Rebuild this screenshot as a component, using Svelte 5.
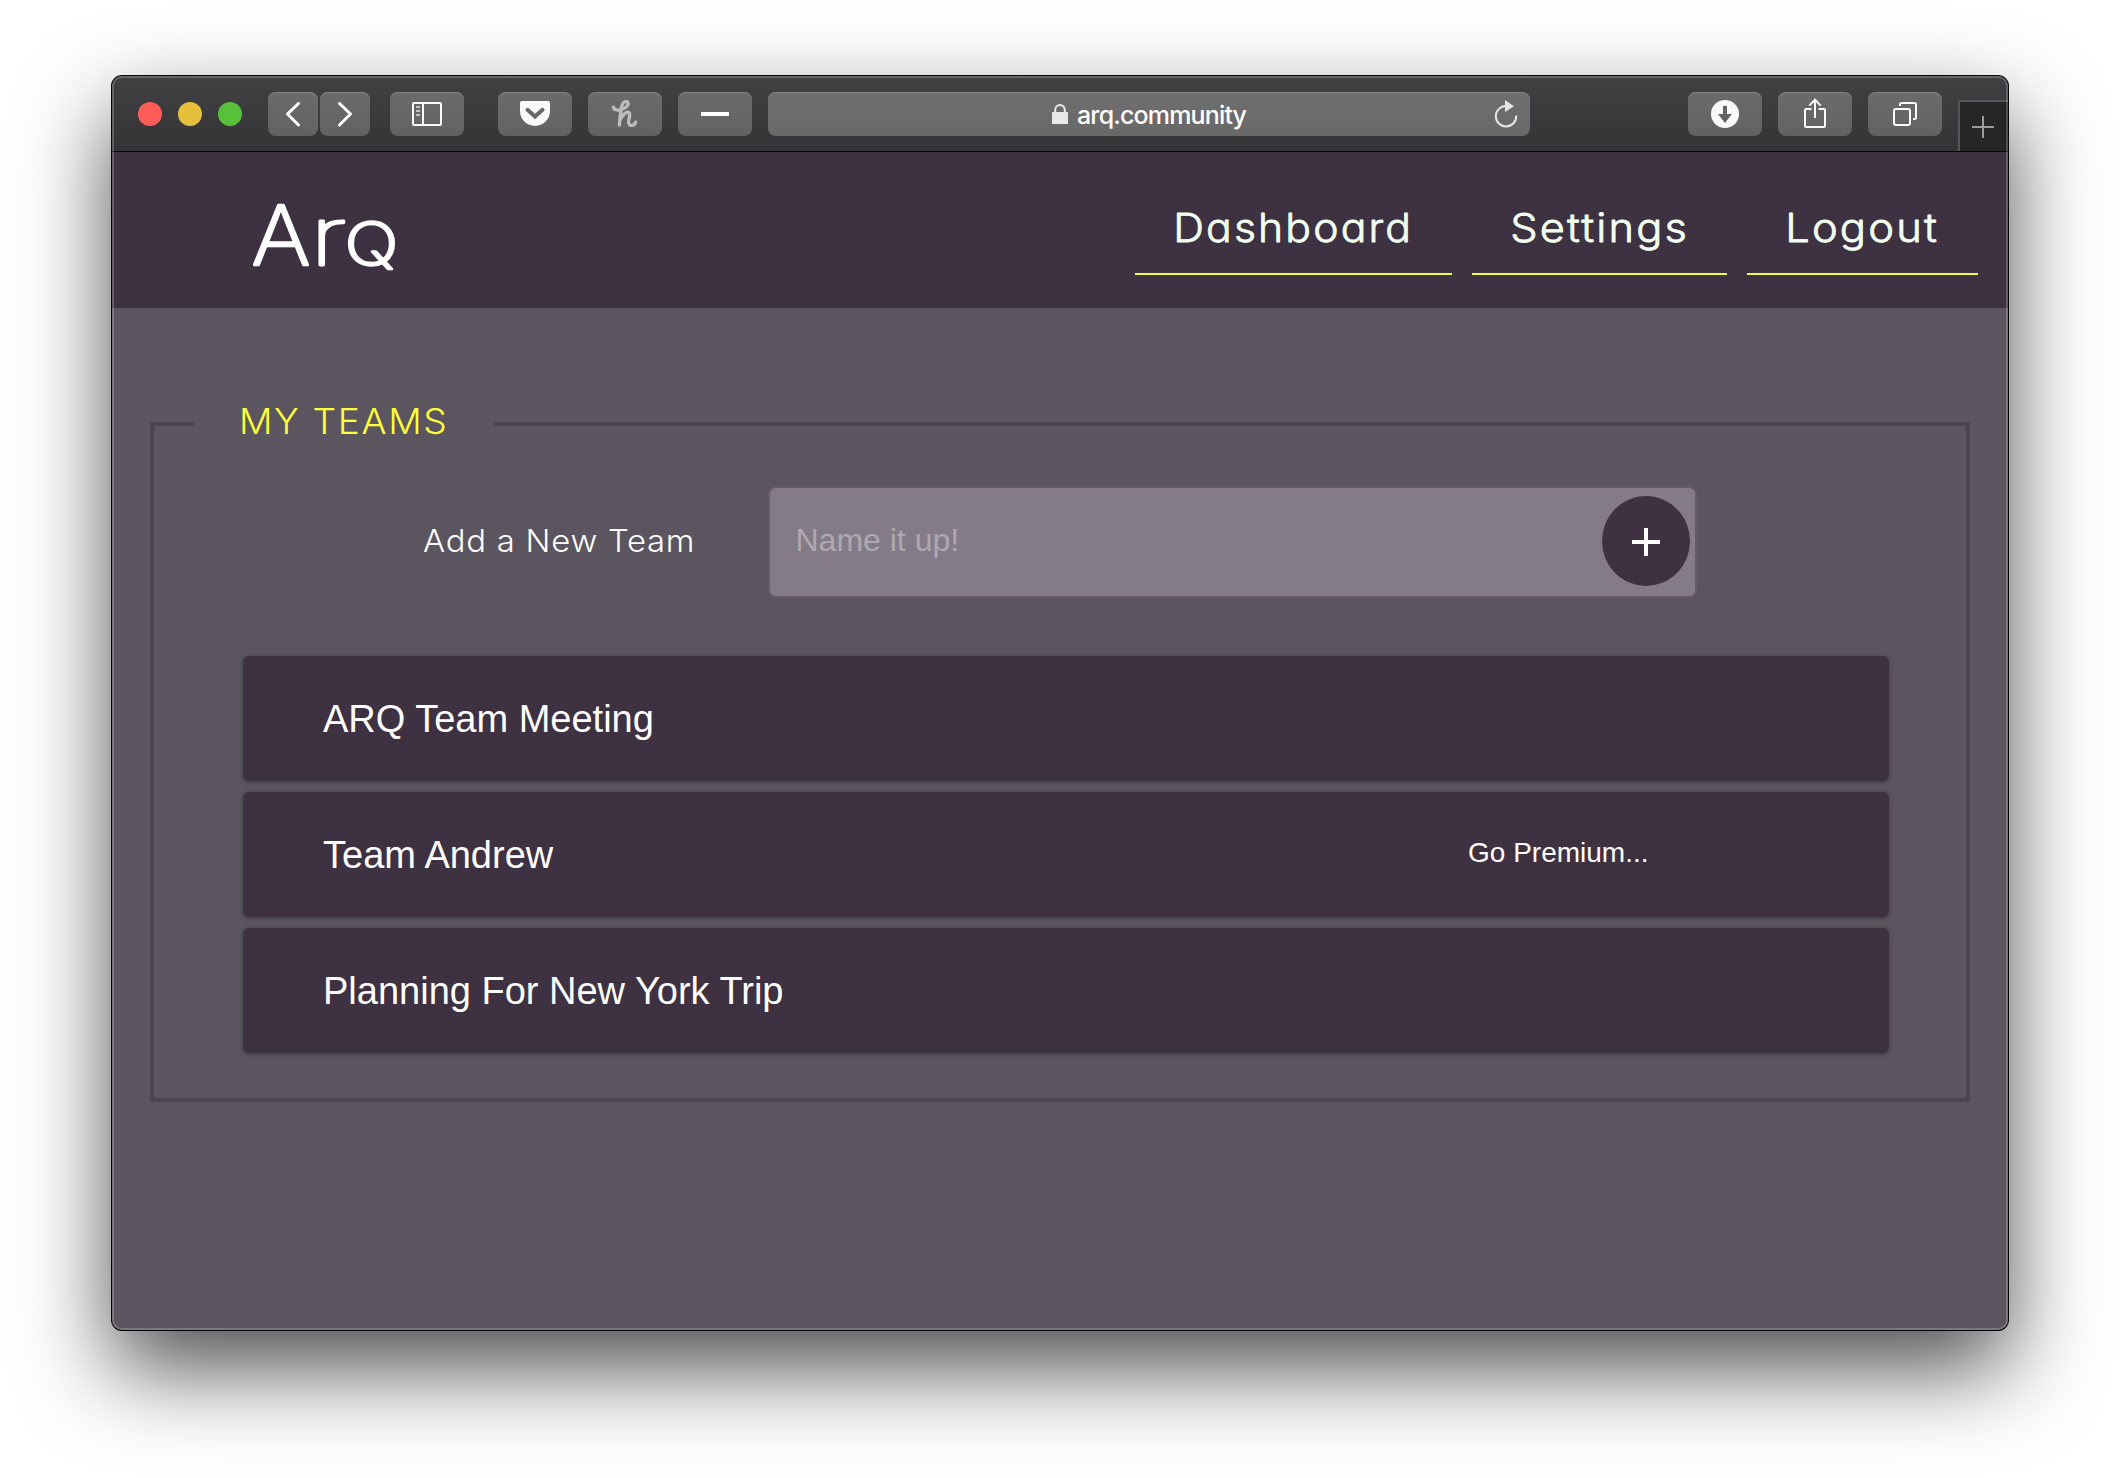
<script>
  const teams = [
    { name: 'ARQ Team Meeting' },
    { name: 'Team Andrew', note: 'Go Premium...' },
    { name: 'Planning For New York Trip' }
  ];
  const links = [
    { label: 'Dashboard', width: 317, length: 240 },
    { label: 'Settings', width: 255, length: 179 },
    { label: 'Logout', width: 231, length: 154 }
  ];
</script>

<div class="desktop">
  <div class="window">
    <div class="toolbar">
      <div class="lights"><i class="red"></i><i class="yellow"></i><i class="green"></i></div>
      <div class="pair">
        <div class="btn small"><svg width="50" height="44"><path class="nav-arrow" d="M30.500 11.5 19.500 22 30.500 33" /></svg></div>
        <div class="btn small"><svg width="50" height="44"><path class="nav-arrow" d="M19.5 11.5 30.5 22 19.5 33" /></svg></div>
      </div>
      <div class="btn sidebar">
        <svg width="74" height="44"><rect class="line" x="23" y="11" width="28" height="22" rx="1" /><path class="line" d="M33 11V33" /><path class="dim" d="M26 15h4M26 19h4M26 23h4" /></svg>
      </div>
      <div class="exts">
        <div class="btn">
          <svg width="74" height="44"><path fill="#fafafc" d="M24 9H50Q52 9 52 11V19A15 15 0 0 1 22 19V11Q22 9 24 9Z" /><path d="M29.5 17.8 37 24.6 44.5 17.8" fill="none" stroke="#6a6a6c" stroke-width="4" stroke-linecap="round" /></svg>
        </div>
        <div class="btn">
          <svg width="74" height="44"><path class="honey" d="M25.3 15.2C26 18.5 30 18.6 34 17.2C38.5 15.8 41 12.8 39.8 10.6C38.6 8.5 35.4 9.6 34.1 13C32.5 18 32 26 31.4 33.2M32 28C34.5 22.5 38.5 19.2 41 20.6C43 22 40.6 26.5 40.6 30.2C40.6 34.8 46.5 34.2 47.6 30.2" /></svg>
        </div>
        <div class="btn"><svg width="74" height="44"><rect x="23" y="20" width="28" height="4" fill="#fff" /></svg></div>
      </div>
      <div class="address">
        <svg class="lock" width="16" height="20"><rect y="8" width="16" height="12" rx=".5" fill="#e8e8e8" /><path d="M3.2 9V6a4.8 5 0 0 1 9.6 0V9" fill="none" stroke="#e8e8e8" stroke-width="2" /></svg>
        <span>arq.community</span>
        <svg class="reload" width="24" height="28"><path d="M12 6A10.2 10.2 0 1 0 22.2 15.5" fill="none" stroke="#e6e6e6" stroke-width="2" /><path d="M11 0 20 6.2 11 12Z" fill="#e6e6e6" /></svg>
      </div>
      <div class="right">
        <div class="btn">
          <svg width="74" height="44"><circle cx="37" cy="22" r="14" fill="#fafafc" /><path d="M35 14h4v8h5l-7 9-7-9h5z" fill="#636365" /></svg>
        </div>
        <div class="btn">
          <svg width="74" height="44"><path class="line" d="M33.5 17H28Q27 17 27 18V34Q27 35 28 35H46Q47 35 47 34V18Q47 17 46 17H40.5M37 26V8M31.3 13.6 37 7.8 42.7 13.6" /></svg>
        </div>
        <div class="btn">
          <svg width="74" height="44"><rect class="line" x="26" y="17" width="16" height="16" rx="2" /><path class="line" d="M32 14V12.500Q32 11 33.500 11H46.500Q48 11 48 12.500V25.500Q48 27 46.500 27H45" /></svg>
        </div>
      </div>
      <div class="newtab"><svg width="48" height="48"><path d="M12 25H34M23 14V36" stroke="#9c9c9c" stroke-width="2" /></svg></div>
    </div>

    <header>
      <svg class="logo" width="160" height="90">
        <text y="65"><tspan x="-.500" textLength="59" lengthAdjust="spacingAndGlyphs">A</tspan><tspan class="thin" x="57.500" textLength="37" lengthAdjust="spacingAndGlyphs">r</tspan><tspan class="cap" x="92.500" y="64.500" textLength="54" lengthAdjust="spacingAndGlyphs">q</tspan></text>
      </svg>
      <nav>
        {#each links as link}
          <a style:width="{link.width}px">
            <svg width={link.width} height="60"><text x="38.200" y="41.500" textLength={link.length} lengthAdjust="spacingAndGlyphs">{link.label}</text></svg>
          </a>
        {/each}
      </nav>
    </header>

    <main>
      <fieldset>
        <legend><span>MY TEAMS</span></legend>
        <div class="add">
          <div class="label"><span>Add a New Team</span></div>
          <div class="field">
            <span>Name it up!</span>
            <div class="plus"><svg width="28" height="28"><path d="M0 14H28M14 0V28" stroke="#fff" stroke-width="4" /></svg></div>
          </div>
        </div>
        <div class="list">
          {#each teams as team}
            <div class="card">
              <span class="name">{team.name}</span>
              {#if team.note}<span class="note">{team.note}</span>{/if}
            </div>
          {/each}
        </div>
      </fieldset>
    </main>
  </div>
</div>

<style>
  :global(body) { background: #fff; overflow: hidden; }
  .desktop { box-sizing: border-box; width: 2120px; height: 1478px; padding: 76px 112px; overflow: hidden; }
  .window {
    position: relative; display: flex; flex-direction: column; width: 1896px; height: 1254px;
    border-radius: 10px; background: #5b5560;
    box-shadow: 0 0 0 1px #060606, 0 38px 90px rgba(0, 0, 0, .7);
  }
  /* light inner rim of the window */
  .window::after {
    content: ''; position: absolute; inset: 0; border-radius: 10px; pointer-events: none;
    border: 2px solid rgba(255, 255, 255, .2);
  }
  svg { display: block; }
  .toolbar {
    display: flex; box-sizing: border-box; height: 76px; padding: 16px 0 0 26px;
    border-bottom: 1px solid #050505; border-radius: 10px 10px 0 0;
    background: linear-gradient(#414143, #343436);
  }
  .lights { display: flex; gap: 16px; padding-top: 10px; }
  .lights i { width: 24px; height: 24px; border-radius: 50%; }
  .red { background: #fe5c58; }
  .yellow { background: #e6c03d; }
  .green { background: #58c03a; }
  .pair { display: flex; gap: 2px; margin-left: 26px; }
  .btn {
    width: 74px; height: 44px; border-radius: 8px; flex: none;
    background: linear-gradient(#6b6b6d, #626264); box-shadow: inset 0 1px 0 #808082;
  }
  .btn.small { width: 50px; }
  .nav-arrow { fill: none; stroke: #fff; stroke-width: 3; stroke-linecap: round; stroke-linejoin: round; }
  .line { fill: none; stroke: #fafafc; stroke-width: 2; }
  .dim { stroke: #c4c4c6; stroke-width: 2; }
  .honey { fill: none; stroke: #bdbdbf; stroke-width: 3.3; stroke-linecap: round; }
  .sidebar { margin-left: 20px; }
  .exts { display: flex; gap: 16px; margin-left: 34px; }
  .address {
    display: flex; box-sizing: border-box; width: 762px; height: 44px; margin-left: 16px; padding: 0 12px 0 284px;
    border-radius: 8px; background: linear-gradient(#6f6f6f, #686868); box-shadow: inset 0 1px 0 #858585;
  }
  .lock { margin-top: 12px; }
  .address span {
    margin-left: 9px; color: #fff; font: 500 25px/47px Inter, sans-serif; letter-spacing: -.85px;
  }
  .reload { margin: 8px 0 0 auto; }
  .right { display: flex; gap: 16px; margin-left: 158px; }
  .newtab {
    width: 48px; height: 49px; margin: 8px 0 0 16px; background: #262627;
    border-left: 2px solid #565658; border-top: 2px solid #565658;
  }
  header { display: flex; height: 156px; background: #3e3142; justify-content: space-between; }
  .logo { margin: 48px 0 0 140px; overflow: visible; }
  .logo text {
    font: 200 83px Inter, sans-serif; fill: #fff; stroke: #fff; stroke-width: 2.4; stroke-linejoin: round;
  }
  .logo .thin { font-size: 80px; font-weight: 100; stroke-width: 2.8; }
  .logo .cap { font-size: 59px; text-transform: uppercase; }
  nav { display: flex; gap: 20px; margin: 48px 30px 0 0; }
  nav a { box-sizing: border-box; height: 75px; border-bottom: 2px solid #ecff3d; }
  nav text {
    font: 300 39.500px Inter, sans-serif; font-feature-settings: 'cv11'; fill: #f1ffef; letter-spacing: 2px;
    stroke: #f1ffef; stroke-width: .8; stroke-linejoin: round;
  }
  main { padding: 94px 38px 0; }
  fieldset { box-sizing: border-box; height: 700px; margin: 0; padding: 0; border: 4px solid #4c4551; }
  legend {
    box-sizing: border-box; width: 300px; height: 44px; margin-left: 40px; padding: 0 0 5px 45px;
    font: 300 35px/39px Inter, sans-serif; letter-spacing: 1.5px; color: #ffff3a; white-space: nowrap;
  }
  /* widened letterforms for the section title and field label */
  legend span { display: inline-block; transform: scaleX(1.063); transform-origin: 0 50%; }
  .label span { display: inline-block; transform: scaleX(1.06); transform-origin: 0 50%; }
  .add { display: flex; align-items: center; margin: 40px 0 0 269px; color: #fff; }
  .label { width: 345px; padding-bottom: 3px; font: 300 31px Inter, sans-serif; letter-spacing: .7px; }
  .field {
    display: flex; align-items: center; justify-content: space-between; box-sizing: border-box;
    width: 929px; height: 112px; padding: 0 5px 0 25.500px; border: 2px solid #645d69; border-radius: 8px; background: #837c88;
  }
  .field span { padding-bottom: 4px; font: 32px 'Liberation Sans', Arial, sans-serif; color: #aea8b1; }
  .plus {
    display: flex; align-items: center; justify-content: center; width: 88px; height: 90px;
    margin-bottom: 2px; border-radius: 50%; background: #3e3142;
  }
  .plus svg { margin-top: 1px; }
  .list { display: flex; flex-direction: column; gap: 11px; margin: 58px 77px 0 89px; }
  .card {
    display: grid; grid-template-columns: 1145px 1fr; align-items: center; box-sizing: border-box; height: 125px;
    padding-left: 80px; border-radius: 6px; background: #3e3142; color: #fff;
    font-family: 'Liberation Sans', Arial, sans-serif; box-shadow: 0 1px 4px rgba(40, 45, 40, .7);
  }
  .name { padding-top: 2px; font-size: 38px; }
  .note { padding-bottom: 4px; font-size: 28px; }
</style>
